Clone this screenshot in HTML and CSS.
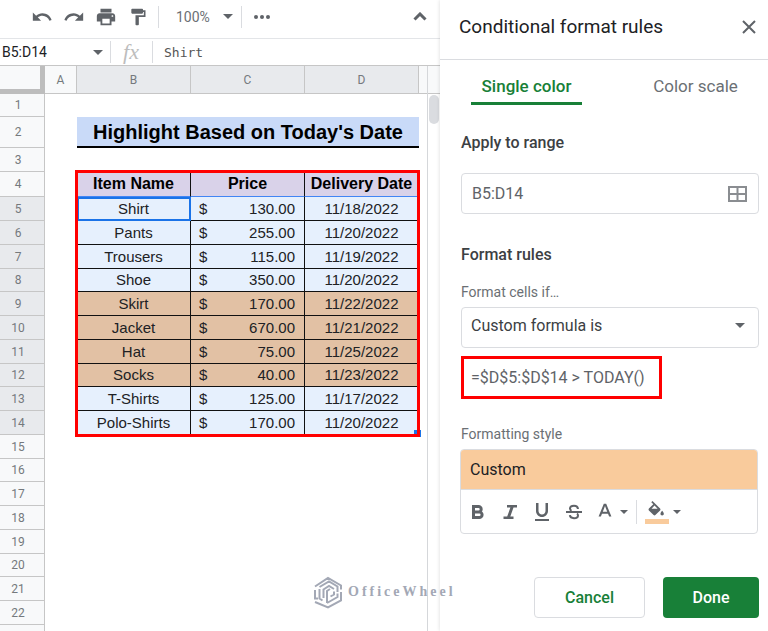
FILE: index.html
```html
<!DOCTYPE html>
<html lang="en">
<head>
<meta charset="utf-8">
<meta name="viewport" content="width=device-width, initial-scale=1">
<title>Conditional format rules</title>
<link rel="stylesheet" href="styles.css">
</head>
<body>
<div class="app">
  <main class="workspace">
    <div class="toolbar">
      <button class="tool" aria-label="Undo"><svg width="22" height="22" viewBox="0 0 24 24"><path d="M12.5 8c-2.65 0-5.05.99-6.9 2.6L2 7v9h9l-3.62-3.62c1.39-1.16 3.16-1.88 5.12-1.88 3.54 0 6.55 2.31 7.6 5.5l2.37-.78C21.08 11.03 17.15 8 12.5 8z"/></svg></button>
      <button class="tool" aria-label="Redo"><svg width="22" height="22" viewBox="0 0 24 24"><path d="M18.4 10.6C16.55 8.99 14.15 8 11.5 8c-4.65 0-8.58 3.03-9.96 7.22L3.9 16c1.05-3.19 4.05-5.5 7.6-5.5 1.95 0 3.73.72 5.12 1.88L13 16h9V7l-3.6 3.6z"/></svg></button>
      <button class="tool" aria-label="Print"><svg width="22" height="22" viewBox="0 0 24 24"><path d="M19 8H5c-1.66 0-3 1.34-3 3v6h4v4h12v-4h4v-6c0-1.66-1.34-3-3-3zm-3 11H8v-5h8v5zm3-7c-.55 0-1-.45-1-1s.45-1 1-1 1 .45 1 1-.45 1-1 1zm-1-9H6v4h12V3z"/></svg></button>
      <button class="tool" aria-label="Paint format"><svg width="20" height="20" viewBox="0 0 24 24"><path d="M18 4V3c0-.55-.45-1-1-1H5c-.55 0-1 .45-1 1v4c0 .55.45 1 1 1h12c.55 0 1-.45 1-1V6h1v4H9v11c0 .55.45 1 1 1h2c.55 0 1-.45 1-1v-9h8V4h-3z"/></svg></button>
      <span class="divider"></span>
      <span class="zoom">
        <select aria-label="Zoom"><option>100%</option></select>
        <svg class="caret" width="10" height="5" viewBox="0 0 10 5"><path d="M0 0h10L5 5z"/></svg>
      </span>
      <span class="divider"></span>
      <button class="tool" aria-label="More"><svg width="18" height="18" viewBox="0 0 18 18"><circle cx="3" cy="9" r="2"/><circle cx="9" cy="9" r="2"/><circle cx="15" cy="9" r="2"/></svg></button>
      <button class="tool collapse" aria-label="Hide the menus"><svg width="14" height="9" viewBox="0 0 14 9"><path d="M1.5 7.5L7 2l5.500 5.500" class="line"/></svg></button>
    </div>

    <div class="formula-bar">
      <input class="name-box" aria-label="Name box" value="B5:D14">
      <svg class="caret" width="10" height="5" viewBox="0 0 10 5"><path d="M0 0h10L5 5z"/></svg>
      <span class="divider"></span>
      <span class="fx">fx</span>
      <span class="divider"></span>
      <input class="formula" aria-label="Formula" value="Shirt">
    </div>

    <div class="sheet">
      <div class="grid">
        <table>
          <colgroup><col class="c-num"><col class="c-a"><col class="c-data"><col class="c-data"><col class="c-data"><col></colgroup>
          <thead>
            <tr><th class="corner"></th><th>A</th><th class="on">B</th><th class="on">C</th><th class="on">D</th><th></th></tr>
          </thead>
          <tbody>
            <tr class="r1"><th>1</th><td></td><td></td><td></td><td></td><td></td></tr>
            <tr class="r2"><th>2</th><td></td><td colspan="3" class="title">Highlight Based on Today's Date</td><td></td></tr>
            <tr><th>3</th><td></td><td></td><td></td><td></td><td></td></tr>
            <tr class="r4"><th>4</th><td></td><td class="head">Item Name</td><td class="head">Price</td><td class="head">Delivery Date</td><td></td></tr>
            <tr class="data"><th>5</th><td></td><td class="active">Shirt</td><td><span class="money"><span>$</span><span>130.00</span></span></td><td>11/18/2022</td><td></td></tr>
            <tr class="data"><th>6</th><td></td><td>Pants</td><td><span class="money"><span>$</span><span>255.00</span></span></td><td>11/20/2022</td><td></td></tr>
            <tr class="data"><th>7</th><td></td><td>Trousers</td><td><span class="money"><span>$</span><span>115.00</span></span></td><td>11/19/2022</td><td></td></tr>
            <tr class="data"><th>8</th><td></td><td>Shoe</td><td><span class="money"><span>$</span><span>350.00</span></span></td><td>11/20/2022</td><td></td></tr>
            <tr class="data match"><th>9</th><td></td><td>Skirt</td><td><span class="money"><span>$</span><span>170.00</span></span></td><td>11/22/2022</td><td></td></tr>
            <tr class="data match"><th>10</th><td></td><td>Jacket</td><td><span class="money"><span>$</span><span>670.00</span></span></td><td>11/21/2022</td><td></td></tr>
            <tr class="data match"><th>11</th><td></td><td>Hat</td><td><span class="money"><span>$</span><span>75.00</span></span></td><td>11/25/2022</td><td></td></tr>
            <tr class="data match"><th>12</th><td></td><td>Socks</td><td><span class="money"><span>$</span><span>40.00</span></span></td><td>11/23/2022</td><td></td></tr>
            <tr class="data"><th>13</th><td></td><td>T-Shirts</td><td><span class="money"><span>$</span><span>125.00</span></span></td><td>11/17/2022</td><td></td></tr>
            <tr class="data"><th>14</th><td></td><td>Polo-Shirts</td><td><span class="money"><span>$</span><span>170.00</span></span></td><td>11/20/2022</td><td></td></tr>
            <tr><th>15</th><td></td><td></td><td></td><td></td><td></td></tr>
            <tr><th>16</th><td></td><td></td><td></td><td></td><td></td></tr>
            <tr><th>17</th><td></td><td></td><td></td><td></td><td></td></tr>
            <tr><th>18</th><td></td><td></td><td></td><td></td><td></td></tr>
            <tr><th>19</th><td></td><td></td><td></td><td></td><td></td></tr>
            <tr><th>20</th><td></td><td></td><td></td><td></td><td></td></tr>
            <tr><th>21</th><td></td><td></td><td></td><td></td><td></td></tr>
            <tr><th>22</th><td></td><td></td><td></td><td></td><td></td></tr>
            <tr><th>23</th><td></td><td></td><td></td><td></td><td></td></tr>
          </tbody>
        </table>
        <div class="fill-handle"></div>
        <div class="callout"></div>
      </div>
      <div class="scroll"><div class="scroll-head"></div><div class="thumb"></div></div>
    </div>
  </main>

  <aside class="panel">
    <header class="panel-head">
      <h1>Conditional format rules</h1>
      <button class="close" aria-label="Close"><svg width="14" height="14" viewBox="0 0 14 14"><path d="M1 1l12 12M13 1L1 13"/></svg></button>
    </header>
    <div class="tabs" role="tablist">
      <button class="tab current" role="tab" aria-selected="true">Single color</button>
      <button class="tab" role="tab" aria-selected="false">Color scale</button>
    </div>
    <form class="rules">
      <label class="section" for="range">Apply to range</label>
      <div class="field range">
        <input id="range" value="B5:D14">
        <button type="button" class="pick" aria-label="Select data range"><svg width="19" height="16" viewBox="0 0 19 16"><path d="M1 1h17v14H1zM9.500 1v14M1 8h17"/></svg></button>
      </div>
      <h2 class="section">Format rules</h2>
      <label class="small" for="condition">Format cells if…</label>
      <div class="field condition">
        <select id="condition"><option>Custom formula is</option></select>
        <svg class="caret" width="10" height="5" viewBox="0 0 10 5"><path d="M0 0h10L5 5z"/></svg>
      </div>
      <input class="custom-formula" aria-label="Formula value" value="=$D$5:$D$14 &gt; TODAY()">
      <h3 class="small">Formatting style</h3>
      <div class="style-box">
        <button type="button" class="preset">Custom</button>
        <div class="style-tools">
          <button type="button" aria-label="Bold"><svg width="24" height="24" viewBox="0 0 24 24"><path class="stroke" d="M7.500 6.500h5a2.700 2.700 0 0 1 0 5.400h-5zM7.500 11.900h5.800a2.800 2.800 0 0 1 0 5.600H7.500z"/></svg></button>
          <button type="button" aria-label="Italic"><svg width="24" height="24" viewBox="0 0 24 24"><path d="M9 5v2.500h3.400l-3.200 9H5.500V19h10v-2.500h-3.200l3.200-9H19V5z"/></svg></button>
          <button type="button" aria-label="Underline"><svg width="24" height="24" viewBox="0 0 24 24"><path d="M12 17c3.310 0 6-2.690 6-6V3h-2.500v8c0 1.930-1.570 3.500-3.500 3.500S8.500 12.930 8.500 11V3H6v8c0 3.310 2.690 6 6 6zm-7 2v2h14v-2H5z"/></svg></button>
          <button type="button" aria-label="Strikethrough"><svg width="24" height="24" viewBox="0 0 24 24"><path d="M4 11h16v2H4z"/><path class="stroke thin" d="M16 9C15.800 7 14.200 5.800 12 5.800c-2.300 0-4 1-4 2.800 0 1 .6 1.700 1.500 2.200M15 13.500c.7.500 1 1.100 1 1.900 0 1.800-1.700 2.800-4 2.800s-3.900-1-4.200-3"/></svg></button>
          <button type="button" class="text-color" aria-label="Text color"><svg width="22" height="24" viewBox="0 0 24 24"><path d="M10.700 3L5 17h2.500l1.200-3.100h6.600l1.200 3.100H19L13.300 3zM9.600 11.800L12 5.500l2.400 6.300z"/></svg><svg class="caret" width="8" height="4" viewBox="0 0 10 5"><path d="M0 0h10L5 5z"/></svg></button>
          <span class="divider"></span>
          <button type="button" class="fill-color" aria-label="Fill color"><svg width="24" height="24" viewBox="0 0 24 24"><g transform="translate(1 1) scale(.85)"><path d="M16.560 8.940L7.620 0 6.210 1.410l2.380 2.380-5.150 5.150c-.59.590-.59 1.540 0 2.120l5.500 5.500c.29.290.68.440 1.060.440s.77-.150 1.060-.440l5.500-5.500c.59-.580.59-1.530 0-2.120zM6.500 9L10 5.300 13.700 9zM19 11.500s-2 2.170-2 3.500c0 1.100.9 2 2 2s2-.9 2-2c0-1.330-2-3.500-2-3.500z"/></g><path class="swatch" d="M0 19h24v5H0z"/></svg><svg class="caret" width="8" height="4" viewBox="0 0 10 5"><path d="M0 0h10L5 5z"/></svg></button>
        </div>
      </div>
      <div class="actions">
        <button type="button" class="cancel">Cancel</button>
        <button type="button" class="done">Done</button>
      </div>
    </form>
  </aside>

  <div class="watermark">
    <svg width="30" height="34" viewBox="0 0 30 34"><path d="M2 11.500L15 3l13 7.500v4M2 15v8.500h3M2 27l13 5.500 13-7V17M6.500 14v9.500l3 2M6.500 12L16 6.500l8.500 5V17M10.500 23v-8.500l5.500-3.500 5 3M14 28v-12l3-2M14 28l10.500-6v-3.500M17.500 21.500l3.500-2v-3"/></svg>
    <span>OfficeWheel</span>
  </div>
</div>
</body>
</html>
```
FILE: styles.css
```css
* { box-sizing: border-box; }

body {
  margin: 0;
  background: #fff;
  color: #202124;
  font-family: Roboto, "Liberation Sans", sans-serif;
}

button, input, select {
  margin: 0;
  padding: 0;
  border: 0;
  background: none;
  color: inherit;
  font: inherit;
  outline: none;
}

select { appearance: none; }
svg { display: block; flex: none; fill: #5f6368; }

.app {
  position: relative;
  display: flex;
  height: 100vh;
  overflow: hidden;
}

.workspace {
  flex: 1;
  min-width: 0;
  display: flex;
  flex-direction: column;
}

.divider {
  flex: none;
  width: 1px;
  height: 22px;
  background: #dadce0;
}

/* Toolbar */
.toolbar {
  flex: none;
  display: flex;
  align-items: center;
  gap: 8px;
  height: 39px;
  padding: 0 8px 5px 30px;
  border-bottom: 1px solid #e3e5e8;
}

.tool {
  width: 24px;
  height: 24px;
  display: flex;
  align-items: center;
  justify-content: center;
}

.collapse { margin-left: auto; }
.line { fill: none; stroke: #5f6368; stroke-width: 3; }

.zoom {
  display: flex;
  align-items: center;
  padding-left: 9px;
  color: #6b6f74;
  font-size: 14px;
}

.zoom select { width: 47px; }

/* Formula bar */
.formula-bar {
  flex: none;
  display: flex;
  align-items: center;
  height: 27px;
  border-bottom: 1px solid #c6c6c6;
}

.name-box {
  width: 93px;
  padding-left: 2px;
  font-size: 14px;
}

.formula-bar .divider { margin-left: 7px; }

.fx {
  width: 34px;
  padding-left: 6px;
  text-align: center;
  color: #bdbdbd;
  font: italic 22px/24px "Liberation Serif", serif;
}

.formula {
  flex: 1;
  min-width: 0;
  padding-left: 11px;
  color: #555;
  font-family: "DejaVu Sans Mono", monospace;
  font-size: 13px;
}

/* Spreadsheet */
.sheet {
  flex: 1;
  min-height: 0;
  display: flex;
}

.grid {
  position: relative;
  flex: 1;
  min-width: 0;
  overflow: hidden;
}

table {
  width: 100%;
  table-layout: fixed;
  border-collapse: separate;
  border-spacing: 0;
}

.c-num { width: 45px; }
.c-a { width: 32px; }
.c-data { width: 114px; }

tr { height: 24px; }
tr:nth-child(4n) { height: 23px; }
thead tr { height: 28px; }
.r1 { height: 23px; }
.r2 { height: 31px; }
tr.r4 { height: 25px; }

th, td { padding: 0; }

th {
  border-right: 1px solid #c6c6c6;
  border-bottom: 1px solid #c6c6c6;
  background: #f8f9fa;
  color: #75797d;
  font-size: 12px;
  font-weight: 400;
  line-height: 16px;
}

tbody th { padding-right: 8px; }
th.on, .data th { background: #e8eaed; }
thead th:last-child { border-right: 0; }

.corner {
  border-right: 5px solid #bdbdbd;
  border-bottom: 5px solid #bdbdbd;
}

td {
  text-align: center;
  font-family: "Liberation Sans", sans-serif;
  font-size: 15px;
  line-height: 20px;
  white-space: nowrap;
}

.title {
  border-bottom: 2px solid #000;
  background: #c9daf8;
  color: #000;
  font-size: 20px;
  font-weight: 700;
}

.head {
  border-right: 1px solid #111;
  border-bottom: 1px solid #4285f4;
  background: #d9d2e9;
  color: #000;
  font-size: 16px;
  font-weight: 700;
}

.data td:nth-child(n+3):nth-child(-n+5) {
  border-right: 1px solid #111;
  border-bottom: 1px solid #111;
  background: #e6f0fd;
}

.match td:nth-child(n+3):nth-child(-n+5) { background: #e2c1a4; }

.active {
  outline: 2px solid #1a73e8;
  outline-offset: -2px;
}

.money {
  display: flex;
  justify-content: space-between;
  padding: 0 9px 0 8px;
}

.callout {
  position: absolute;
  top: 104px;
  left: 75px;
  width: 345px;
  height: 267px;
  border: 3px solid #f00;
}

.fill-handle {
  position: absolute;
  top: 364px;
  left: 414px;
  width: 7px;
  height: 7px;
  background: #1a73e8;
}

.scroll {
  width: 13px;
  border-left: 1px solid #d5d7da;
}

.scroll-head {
  height: 28px;
  border-bottom: 1px solid #c6c6c6;
  background: #f8f9fa;
}

.thumb {
  height: 29px;
  margin: 1px 1px 0;
  border-radius: 5px;
  background: #dadce0;
}

/* Side panel */
.panel {
  width: 328px;
  background: #fff;
  box-shadow: 0 0 4px rgba(0, 0, 0, 0.15);
}

.panel-head {
  display: flex;
  align-items: center;
  justify-content: space-between;
  height: 60px;
  padding: 0 12px 5px 19px;
  border-bottom: 1px solid #dadce0;
}

h1, h2, h3 { margin: 0; }

h1 {
  font-size: 19px;
  font-weight: 400;
  line-height: 24px;
}

.close svg { fill: none; stroke: #5f6368; stroke-width: 2; }

.tabs {
  display: flex;
  justify-content: space-between;
  padding: 10px 17px 0 31px;
}

.tab {
  width: 111px;
  height: 35px;
  border-bottom: 3px solid transparent;
  color: #6b6f74;
  font-size: 17px;
}

.current {
  border-color: #188038;
  color: #188038;
  font-weight: 500;
}

.rules {
  display: flex;
  flex-direction: column;
  padding: 28px 9px 0 21px;
}

.section {
  color: #3c4043;
  font-size: 16px;
  font-weight: 500;
  line-height: 20px;
}

.small {
  color: #6b6f74;
  font-size: 14px;
  font-weight: 400;
  line-height: 20px;
}

.field {
  display: flex;
  align-items: center;
  height: 41px;
  border: 1px solid #dadce0;
  border-radius: 4px;
}

.range {
  margin: 20px 0 31px;
  padding: 0 11px 0 10px;
  color: #5f6368;
}

.range input, .condition select {
  flex: 1;
  min-width: 0;
  font-size: 16px;
}

.pick svg { fill: none; stroke: #8a8d91; stroke-width: 2; }

h2.section { margin-bottom: 17px; }

.condition {
  margin: 5px 0 8px;
  padding: 0 13px 4px 9px;
  color: #3c4043;
}

.custom-formula {
  width: 201px;
  height: 43px;
  margin-bottom: 25px;
  padding-left: 7px;
  border: 3px solid #f00;
  color: #5f6368;
  font-size: 16px;
}

.style-box {
  margin: 5px 1px 0 -1px;
  overflow: hidden;
  border: 1px solid #dadce0;
  border-radius: 4px;
}

.preset {
  display: block;
  width: 100%;
  height: 40px;
  padding-left: 9px;
  border-bottom: 1px solid #dadce0;
  background: #f9cb9c;
  font-size: 16px;
  text-align: left;
}

.style-tools {
  display: flex;
  align-items: center;
  gap: 8px;
  height: 43px;
  padding-left: 5px;
}

.style-tools .divider { height: 24px; }
.stroke { fill: none; stroke: #5f6368; stroke-width: 3; }
.thin { stroke-width: 2; }
.swatch { fill: #f9cb9c; }

.text-color, .fill-color {
  display: flex;
  align-items: center;
  gap: 4px;
}

.actions {
  display: flex;
  justify-content: flex-end;
  gap: 18px;
  margin-top: 43px;
}

.actions button {
  height: 41px;
  border-radius: 4px;
  font-size: 16px;
  font-weight: 500;
}

.actions .cancel {
  width: 111px;
  border: 1px solid #dadce0;
  color: #188038;
}

.actions .done {
  width: 96px;
  background: #188038;
  color: #fff;
}

.watermark {
  position: absolute;
  left: 313px;
  bottom: 22px;
  display: flex;
  align-items: center;
  gap: 5px;
  color: #a3a8b5;
  font: bold 14px/16px "Liberation Serif", serif;
  letter-spacing: 3px;
}

.watermark svg { fill: none; stroke: #a3a8b5; stroke-width: 2; }
```
